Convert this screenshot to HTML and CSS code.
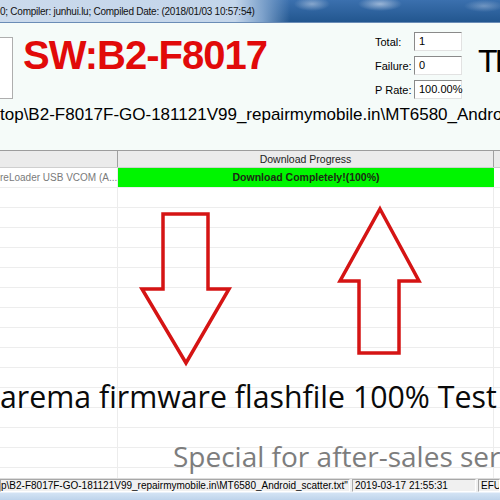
FILE: index.html
```html
<!DOCTYPE html>
<html>
<head>
<meta charset="utf-8">
<link rel="stylesheet" href="styles.css">
</head>
<body>
<div class="titlebar"><span class="title-text">0; Compiler: junhui.lu; Compiled Date: (2018/01/03 10:57:54)</span></div>
<div class="top">
  <div class="top-row">
    <div class="pic"></div>
    <div class="sw">SW:B2-F8017</div>
    <div class="stats">
      <span class="lbl">Total:</span><span class="field">1</span>
      <span class="lbl">Failure:</span><span class="field">0</span>
      <span class="lbl">P Rate:</span><span class="field">100.00%</span>
    </div>
    <div class="ti">TI</div>
  </div>
  <div class="path">top\B2-F8017F-GO-181121V99_repairmymobile.in\MT6580_Android_scatter.txt</div>
</div>
<div class="grid">
  <div class="ghead">
    <div class="c1"></div>
    <div class="c2">Download Progress</div>
    <div class="c3"></div>
  </div>
  <div class="row">
    <div class="c1 port">reLoader USB VCOM (A...</div>
    <div class="c2"><div class="bar">Download Completely!(100%)</div></div>
    <div class="c3"></div>
  </div>
  <div class="row"><div class="c1"></div><div class="c2"></div><div class="c3"></div></div>
  <div class="row"><div class="c1"></div><div class="c2"></div><div class="c3"></div></div>
  <div class="row"><div class="c1"></div><div class="c2"></div><div class="c3"></div></div>
  <div class="row"><div class="c1"></div><div class="c2"></div><div class="c3"></div></div>
  <div class="row"><div class="c1"></div><div class="c2"></div><div class="c3"></div></div>
  <div class="row"><div class="c1"></div><div class="c2"></div><div class="c3"></div></div>
  <div class="row"><div class="c1"></div><div class="c2"></div><div class="c3"></div></div>
  <div class="row"><div class="c1"></div><div class="c2"></div><div class="c3"></div></div>
  <div class="row"><div class="c1"></div><div class="c2"></div><div class="c3"></div></div>
  <div class="row"><div class="c1"></div><div class="c2"></div><div class="c3"></div></div>
  <div class="row"><div class="c1"></div><div class="c2"></div><div class="c3"></div></div>
  <div class="row"><div class="c1"></div><div class="c2"></div><div class="c3"></div></div>
  <div class="row"><div class="c1"></div><div class="c2"></div><div class="c3"></div></div>
  <div class="row"><div class="c1"></div><div class="c2"></div><div class="c3"></div></div>
  <div class="row"><div class="c1"></div><div class="c2"></div><div class="c3"></div></div>
  <svg class="arrows" width="500" height="330" viewBox="0 0 500 330">
    <polygon points="163,64 208,64 208,139 229,139 186,213 142,139 163,139"/>
    <polygon points="380,59 419,131 399,131 399,203 359,203 359,131 340,131"/>
  </svg>
  <div class="slogan">arema firmware flashfile 100% Test</div>
  <div class="special">Special for after-sales ser</div>
</div>
<div class="status">
  <div class="panel p1">p\B2-F8017F-GO-181121V99_repairmymobile.in\MT6580_Android_scatter.txt"</div>
  <div class="panel p2">2019-03-17 21:55:31</div>
  <div class="panel p3">EFUSE</div>
</div>
<div class="taskbar"></div>
</body>
</html>
```
FILE: styles.css
```css
body {
  margin: 0;
  width: 500px;
  height: 500px;
  overflow: hidden;
  background: #ffffff;
  font-family: "Liberation Sans", Arial, sans-serif;
  color: #000;
}

.titlebar {
  height: 23px;
  box-sizing: border-box;
  border-bottom: 1px solid #6a8cb6;
  background:
    radial-gradient(ellipse 18px 7px at 312px 4px, rgba(200,215,235,0.55), rgba(200,215,235,0) 100%),
    radial-gradient(ellipse 22px 7px at 380px 4px, rgba(220,230,245,0.6), rgba(220,230,245,0) 100%),
    radial-gradient(ellipse 20px 6px at 484px 6px, rgba(200,215,235,0.4), rgba(200,215,235,0) 100%),
    linear-gradient(to right, #cbdaec 0, #c3d5ea 235px, #7fa3cc 262px, rgba(40,90,150,0) 290px),
    linear-gradient(to bottom, #3b70ae, #22568f);
  display: flex;
  align-items: center;
  overflow: hidden;
}

.title-text {
  font-size: 10px;
  white-space: nowrap;
  color: #111;
  letter-spacing: -0.25px;
}

.top {
  height: 127px;
  background: #f5fbf9;
}

.top-row {
  display: flex;
  height: 81px;
}

.pic {
  flex: 0 0 12px;
  height: 60px;
  margin-top: 14px;
  background: #ffffff;
  border: 1px solid #aeaeae;
  border-left: none;
}

.sw {
  flex: 0 0 352px;
  margin-left: 10px;
  margin-top: 12px;
  font-size: 40px;
  line-height: 40px;
  font-weight: bold;
  letter-spacing: -1px;
  color: #e10a0a;
  white-space: nowrap;
}

.stats {
  display: grid;
  grid-template-columns: 39px 48px;
  grid-auto-rows: 19px;
  row-gap: 5px;
  margin-top: 9px;
  align-items: center;
  font-size: 11px;
}

.lbl {
  white-space: nowrap;
}

.field {
  height: 19px;
  box-sizing: border-box;
  border: 1px solid;
  border-color: #8a8a8a #e2e2e2 #e2e2e2 #8a8a8a;
  background: #ffffff;
  padding-left: 4px;
  line-height: 17px;
  white-space: nowrap;
}

.ti {
  margin-left: 16px;
  margin-top: 22px;
  font-size: 32px;
  line-height: 32px;
  letter-spacing: -3px;
  white-space: nowrap;
}

.path {
  font-size: 17px;
  line-height: 20px;
  padding-top: 1px;
  white-space: nowrap;
}

.grid {
  position: relative;
  height: 328px;
  overflow: hidden;
  background: #ffffff;
}

.ghead {
  display: flex;
  height: 18px;
  box-sizing: border-box;
  border-top: 1px solid #9c9c9c;
  border-bottom: 1px solid #cfcfcf;
  background: #ebebeb;
  font-size: 10.5px;
  color: #222;
}

.ghead .c1, .ghead .c2 {
  border-right: 1px solid #a0a0a0;
}

.ghead .c2 {
  text-align: center;
  line-height: 16px;
}

.c1 {
  flex: 0 0 118px;
  box-sizing: border-box;
  overflow: hidden;
  white-space: nowrap;
}

.c2 {
  flex: 0 0 376px;
  box-sizing: border-box;
}

.c3 {
  flex: 1;
}

.row {
  display: flex;
  height: 20px;
  box-sizing: border-box;
  border-bottom: 1px solid #ededed;
}

.row .c1, .row .c2 {
  border-right: 1px solid #ececec;
}

.port {
  font-size: 10px;
  color: #7a7a7a;
  line-height: 19px;
}

.bar {
  height: 19px;
  margin-right: -1px;
  background: #00f500;
  text-align: center;
  font-size: 10.5px;
  font-weight: bold;
  line-height: 19px;
  color: #1c2a14;
}

.arrows {
  position: absolute;
  left: 0;
  top: 0;
}

.arrows polygon {
  fill: none;
  stroke: #d51414;
  stroke-width: 3.5;
  stroke-linejoin: miter;
}

.slogan {
  position: absolute;
  left: 0;
  top: 232px;
  font-family: "Open Sans", sans-serif;
  font-size: 30.3px;
  line-height: 30px;
  white-space: nowrap;
  color: #0a0a0a;
}

.special {
  position: absolute;
  left: 173px;
  top: 292px;
  font-family: "Open Sans", sans-serif;
  font-size: 28px;
  line-height: 28px;
  white-space: nowrap;
  color: #7d7d7d;
}

.status {
  display: flex;
  height: 14px;
  background: #f0f0f0;
  font-size: 10px;
  line-height: 12px;
  border-top: 1px solid #dcdcdc;
  box-sizing: border-box;
  gap: 2px;
}

.panel {
  box-sizing: border-box;
  border: 1px solid;
  border-color: #a8a8a8 #ffffff #ffffff #a8a8a8;
  white-space: nowrap;
  overflow: hidden;
  height: 13px;
}

.p1 { flex: 0 0 350px; }
.p2 { flex: 0 0 124px; padding-left: 2px; }
.p3 { flex: 1; padding-left: 2px; }

.taskbar {
  height: 8px;
  background: linear-gradient(to bottom, #d3e3f4, #bcd2ea);
  border-top: 1px solid #e9f1fa;
}
```
